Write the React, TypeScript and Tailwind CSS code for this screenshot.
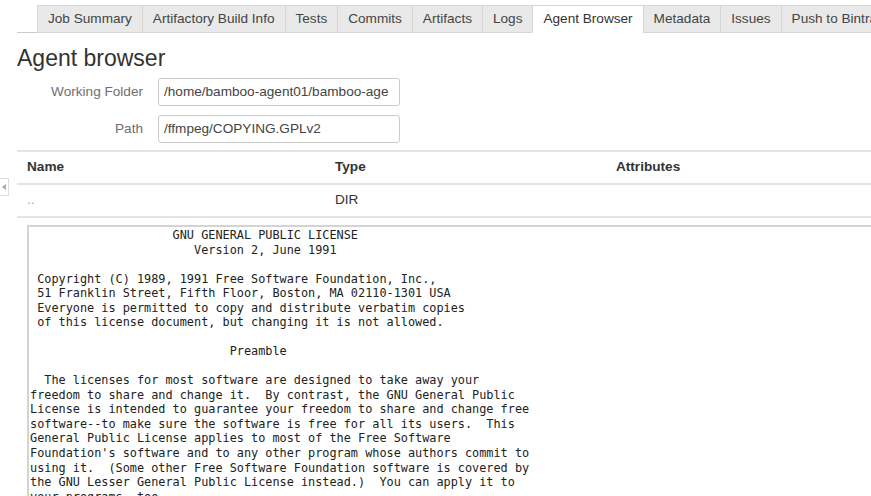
import React from "react";

const tabs = [
  "Job Summary",
  "Artifactory Build Info",
  "Tests",
  "Commits",
  "Artifacts",
  "Logs",
  "Agent Browser",
  "Metadata",
  "Issues",
  "Push to Bintray",
];

const license = `                    GNU GENERAL PUBLIC LICENSE
                       Version 2, June 1991

 Copyright (C) 1989, 1991 Free Software Foundation, Inc.,
 51 Franklin Street, Fifth Floor, Boston, MA 02110-1301 USA
 Everyone is permitted to copy and distribute verbatim copies
 of this license document, but changing it is not allowed.

                            Preamble

  The licenses for most software are designed to take away your
freedom to share and change it.  By contrast, the GNU General Public
License is intended to guarantee your freedom to share and change free
software--to make sure the software is free for all its users.  This
General Public License applies to most of the Free Software
Foundation's software and to any other program whose authors commit to
using it.  (Some other Free Software Foundation software is covered by
the GNU Lesser General Public License instead.)  You can apply it to
your programs, too.

  When we speak of free software, we are referring to freedom, not
price.`;

export default function App() {
  return (
    <div
      className="relative w-[871px] h-[496px] overflow-hidden bg-white text-[#333]"
      style={{ fontFamily: '"Liberation Sans", Arial, sans-serif' }}
    >
      {/* sidebar toggle */}
      <div className="absolute left-0 top-[178px] w-[9px] h-[18px] border border-l-0 border-[#ddd] bg-white flex items-center justify-center">
        <svg width="4" height="6" viewBox="0 0 4 6">
          <path d="M4 0 L0 3 L4 6 Z" fill="#aaa" />
        </svg>
      </div>

      <div className="pl-[17px]">
        {/* tabs */}
        <div className="pt-[5px] border-b border-[#ccc] flex pl-[20px] whitespace-nowrap">
          {tabs.map((t) => {
            const active = t === "Agent Browser";
            return (
              <div
                key={t}
                className={
                  "h-[28px] flex items-center px-[10px] text-[13.6px] border border-[#d6d6d6] -ml-px first:ml-0 -mb-px " +
                  (active
                    ? "bg-white border-b-white text-[#333]"
                    : "bg-[#e9e9e9] text-[#444]")
                }
              >
                {t}
              </div>
            );
          })}
        </div>

        {/* heading */}
        <h1 className="mt-[11px] text-[23px] leading-[28px] text-[#333]">Agent browser</h1>

        {/* form */}
        <div className="mt-[6px] flex flex-col gap-[9px]">
          <div className="flex items-center">
            <div className="w-[126px] text-right text-[13.6px] text-[#707070]">Working Folder</div>
            <div className="ml-[15px] w-[242px] h-[28px] border border-[#ccc] rounded-[3px] px-[5px] flex items-center text-[13.6px] text-[#444] overflow-hidden whitespace-nowrap">
              /home/bamboo-agent01/bamboo-age
            </div>
          </div>
          <div className="flex items-center">
            <div className="w-[126px] text-right text-[13.6px] text-[#707070]">Path</div>
            <div className="ml-[15px] w-[242px] h-[28px] border border-[#ccc] rounded-[3px] px-[5px] flex items-center text-[13.6px] text-[#444] overflow-hidden whitespace-nowrap">
              /ffmpeg/COPYING.GPLv2
            </div>
          </div>
        </div>

        {/* table */}
        <div className="mt-[7px] w-[900px] border-t-2 border-[#e4e4e4]">
          <div className="flex h-[33px] items-center border-b-2 border-[#e4e4e4] text-[13.6px] font-bold text-[#333]">
            <div className="w-[308px] pl-[10px]">Name</div>
            <div className="w-[281px] pl-[10px]">Type</div>
            <div className="pl-[10px]">Attributes</div>
          </div>
          <div className="flex h-[33px] items-center border-b-2 border-[#e4e4e4] text-[13.6px]">
            <div className="w-[308px] pl-[10px] text-[#8aa0d0]">..</div>
            <div className="w-[281px] pl-[10px] text-[#333]">DIR</div>
            <div className="pl-[10px]"></div>
          </div>
        </div>

        {/* file content */}
        <div className="mt-[7px] ml-[10px] w-[900px] h-[300px] border-2 border-[#d4d4d4] border-r-0">
          <pre
            className="pt-[1px] pl-[1px] text-[11.85px] leading-[14.53px] text-[#222]"
            style={{ fontFamily: '"DejaVu Sans Mono", "Liberation Mono", monospace' }}
          >
            {license}
          </pre>
        </div>
      </div>
    </div>
  );
}
